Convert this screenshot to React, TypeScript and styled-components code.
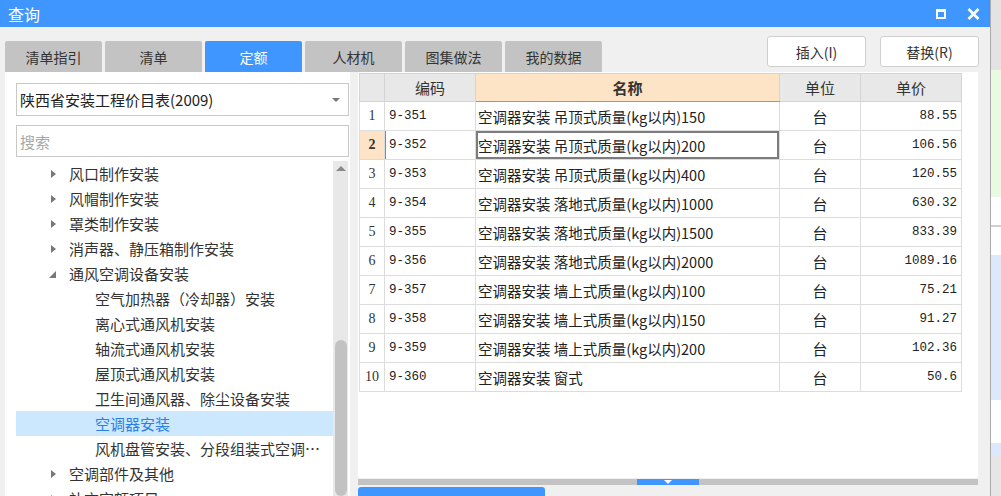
import { createGlobalStyle, styled } from 'styled-components'

const BLUE = '#3f96fe'

const GlobalStyle = createGlobalStyle`
  html, body {
    margin: 0;
    padding: 0;
    width: 1001px;
    height: 496px;
    overflow: hidden;
    background: #f0f0f0;
  }
  body {
    font-family: "Noto Sans CJK SC", "Noto Sans", sans-serif;
    color: #333;
  }
`

type TreeItem = {
  label: string
  level: 1 | 2
  arrow?: 'closed' | 'open'
  selected?: boolean
}

const treeItems: TreeItem[] = [
  { label: '风口制作安装', level: 1, arrow: 'closed' },
  { label: '风帽制作安装', level: 1, arrow: 'closed' },
  { label: '罩类制作安装', level: 1, arrow: 'closed' },
  { label: '消声器、静压箱制作安装', level: 1, arrow: 'closed' },
  { label: '通风空调设备安装', level: 1, arrow: 'open' },
  { label: '空气加热器（冷却器）安装', level: 2 },
  { label: '离心式通风机安装', level: 2 },
  { label: '轴流式通风机安装', level: 2 },
  { label: '屋顶式通风机安装', level: 2 },
  { label: '卫生间通风器、除尘设备安装', level: 2 },
  { label: '空调器安装', level: 2, selected: true },
  { label: '风机盘管安装、分段组装式空调器安装', level: 2 },
  { label: '空调部件及其他', level: 1, arrow: 'closed' },
  { label: '补充定额项目', level: 1, arrow: 'closed' },
]

const rows = [
  ['9-351', '空调器安装 吊顶式质量(kg以内)150', '88.55'],
  ['9-352', '空调器安装 吊顶式质量(kg以内)200', '106.56'],
  ['9-353', '空调器安装 吊顶式质量(kg以内)400', '120.55'],
  ['9-354', '空调器安装 落地式质量(kg以内)1000', '630.32'],
  ['9-355', '空调器安装 落地式质量(kg以内)1500', '833.39'],
  ['9-356', '空调器安装 落地式质量(kg以内)2000', '1089.16'],
  ['9-357', '空调器安装 墙上式质量(kg以内)100', '75.21'],
  ['9-358', '空调器安装 墙上式质量(kg以内)150', '91.27'],
  ['9-359', '空调器安装 墙上式质量(kg以内)200', '102.36'],
  ['9-360', '空调器安装 窗式', '50.6'],
]

const tabs = ['清单指引', '清单', '定额', '人材机', '图集做法', '我的数据']

export default function App() {
  return (
    <Screen>
      <GlobalStyle />
      <Window>
        <TitleBar>
          <Title>查询</Title>
          <WinControls>
            <MaxBox />
            <svg width="13" height="12" viewBox="0 0 13 12">
              <path d="M1.5 1 L11.5 11 M11.5 1 L1.5 11" stroke="#fff" strokeWidth="2.6" />
            </svg>
          </WinControls>
        </TitleBar>

        <Body>
          <Toolbar>
            <Tabs>
              {tabs.map((t) => (
                <Tab key={t} $active={t === '定额'}>
                  {t}
                </Tab>
              ))}
            </Tabs>
            <Actions>
              <ActionButton>插入(I)</ActionButton>
              <ActionButton>替换(R)</ActionButton>
            </Actions>
          </Toolbar>

          <Content>
            <LeftPanel>
              <Select>
                <span>陕西省安装工程价目表(2009)</span>
                <Caret />
              </Select>
              <Search>搜索</Search>
              <Tree>
                <TreeList>
                  {treeItems.map((item) => (
                    <TreeRow key={item.label} $level={item.level} $selected={item.selected}>
                      {item.arrow && (
                        <ArrowBox>
                          {item.arrow === 'closed' ? <ArrowRight /> : <ArrowOpen />}
                        </ArrowBox>
                      )}
                      <TreeLabel>{item.label}</TreeLabel>
                    </TreeRow>
                  ))}
                </TreeList>
                <ScrollBar>
                  <ScrollUp />
                  <ScrollThumb />
                </ScrollBar>
              </Tree>
            </LeftPanel>

            <RightPanel>
              <TableArea>
                <Grid>
                  <colgroup>
                    <col style={{ width: 25 }} />
                    <col style={{ width: 91 }} />
                    <col style={{ width: 304 }} />
                    <col style={{ width: 81 }} />
                    <col style={{ width: 101 }} />
                  </colgroup>
                  <thead>
                    <tr>
                      <Th />
                      <Th>编码</Th>
                      <Th $accent>名称</Th>
                      <Th>单位</Th>
                      <Th>单价</Th>
                    </tr>
                  </thead>
                  <tbody>
                    {rows.map(([code, name, price], i) => {
                      const current = i === 1
                      return (
                        <tr key={code}>
                          <NumCell $current={current}>{i + 1}</NumCell>
                          <CodeCell $current={current}>{code}</CodeCell>
                          <NameCell $focus={current}>{name}</NameCell>
                          <UnitCell>台</UnitCell>
                          <PriceCell>{price}</PriceCell>
                        </tr>
                      )
                    })}
                  </tbody>
                </Grid>
              </TableArea>
              <Splitter>
                <SplitHandle />
              </Splitter>
              <BottomBar>
                <BottomTab />
              </BottomBar>
            </RightPanel>
          </Content>
        </Body>
      </Window>

      <OtherApp>
        <Strip $h={70} $bg="#e3e3e3" />
        <Strip $h={127} $bg="#e8fae2" />
        <Strip $h={28} $bg="#ffffff" />
        <Strip $h={2} $bg="#cfcfcf" />
        <Strip $h={28} $bg="#ffffff" />
        <Strip $h={145} $bg="#dce8fb" />
        <Strip $h={43} $bg="#ffffff" />
        <Strip $h={12} $bg="#dce8fb" />
        <Strip $h={41} $bg="#e6e6e6" />
      </OtherApp>
    </Screen>
  )
}

const Screen = styled.div`
  display: flex;
  width: 1001px;
  height: 496px;
  overflow: hidden;
`

const Window = styled.div`
  width: 990px;
  display: flex;
  flex-direction: column;
  background: #f0f0f0;
`

const TitleBar = styled.div`
  height: 27px;
  flex: none;
  background: ${BLUE};
  display: flex;
  align-items: center;
  justify-content: space-between;
  padding: 0 10px 0 8px;
`

const Title = styled.span`
  color: #fff;
  font-size: 16px;
  line-height: 1;
`

const WinControls = styled.div`
  display: flex;
  align-items: center;
  gap: 21px;
`

const MaxBox = styled.div`
  width: 6px;
  height: 5px;
  border: 2px solid #fff;
  border-top-width: 3px;
`

const Body = styled.div`
  flex: 1;
  display: flex;
  flex-direction: column;
  min-height: 0;
`

const Toolbar = styled.div`
  height: 45px;
  flex: none;
  display: flex;
  padding: 0 11px 0 5px;
`

const Tabs = styled.div`
  display: flex;
  align-self: flex-end;
  gap: 3px;
`

const Tab = styled.div<{ $active?: boolean }>`
  width: 97px;
  height: 31px;
  display: flex;
  align-items: center;
  justify-content: center;
  font-size: 14px;
  border-radius: 2px 2px 0 0;
  background: ${(p) => (p.$active ? BLUE : '#c3c3c3')};
  color: ${(p) => (p.$active ? '#fff' : '#333')};
`

const Actions = styled.div`
  margin-left: auto;
  margin-top: 9px;
  display: flex;
  gap: 14px;
  align-self: flex-start;
`

const ActionButton = styled.div`
  width: 97px;
  height: 29px;
  display: flex;
  align-items: center;
  justify-content: center;
  background: #fff;
  border: 1px solid #cfcfcf;
  border-radius: 3px;
  font-size: 14px;
  color: #333;
`

const Content = styled.div`
  flex: 1;
  min-height: 0;
  display: flex;
  gap: 8px;
  padding: 0 12px 0 5px;
`

const LeftPanel = styled.div`
  width: 345px;
  flex: none;
  background: #fff;
  display: flex;
  flex-direction: column;
  padding: 11px 1px 0 11px;
  box-sizing: border-box;
  min-height: 0;
`

const Select = styled.div`
  height: 33px;
  flex: none;
  box-sizing: border-box;
  border: 1px solid #c8c8c8;
  display: flex;
  align-items: center;
  justify-content: space-between;
  padding: 0 8px 0 3px;
  font-size: 15px;
  color: #222;
`

const Caret = styled.span`
  width: 0;
  height: 0;
  border-left: 4px solid transparent;
  border-right: 4px solid transparent;
  border-top: 4px solid #777;
`

const Search = styled.div`
  margin-top: 9px;
  height: 32px;
  flex: none;
  box-sizing: border-box;
  border: 1px solid #c8c8c8;
  display: flex;
  align-items: center;
  padding-left: 3px;
  font-size: 15px;
  color: #a8a8a8;
`

const Tree = styled.div`
  margin-top: 4px;
  margin-right: 1px;
  flex: 1;
  min-height: 0;
  display: flex;
  overflow: hidden;
`

const TreeList = styled.div`
  flex: 1;
  min-width: 0;
  display: flex;
  flex-direction: column;
`

const TreeRow = styled.div<{ $level: 1 | 2; $selected?: boolean }>`
  height: 25px;
  flex: none;
  display: flex;
  align-items: center;
  padding-left: ${(p) => (p.$level === 1 ? 33 : 79)}px;
  padding-right: 12px;
  font-size: 15px;
  background: ${(p) => (p.$selected ? '#cce8ff' : 'transparent')};
  color: ${(p) => (p.$selected ? '#2b7fe6' : '#333')};
`

const ArrowBox = styled.span`
  width: 20px;
  flex: none;
  display: flex;
  align-items: center;
`

const ArrowRight = styled.span`
  width: 0;
  height: 0;
  margin-left: 2px;
  border-top: 4px solid transparent;
  border-bottom: 4px solid transparent;
  border-left: 5px solid #777;
`

const ArrowOpen = styled.span`
  width: 0;
  height: 0;
  margin-top: 2px;
  border-left: 7px solid transparent;
  border-bottom: 7px solid #777;
`

const TreeLabel = styled.span`
  white-space: nowrap;
  overflow: hidden;
  text-overflow: ellipsis;
`

const ScrollBar = styled.div`
  width: 15px;
  flex: none;
  background: #e8e8e8;
  display: flex;
  flex-direction: column;
  align-items: center;
`

const ScrollUp = styled.span`
  margin-top: 5px;
  width: 0;
  height: 0;
  border-left: 5px solid transparent;
  border-right: 5px solid transparent;
  border-bottom: 5px solid #8a8a8a;
`

const ScrollThumb = styled.div`
  margin-top: 169px;
  width: 12px;
  flex: 1;
  border-radius: 6px;
  background: #c2c2c2;
`

const RightPanel = styled.div`
  flex: 1;
  display: flex;
  flex-direction: column;
  min-height: 0;
`

const TableArea = styled.div`
  height: 406px;
  flex: none;
  background: #fff;
  padding: 1px 0 0 1px;
  box-sizing: border-box;
`

const Grid = styled.table`
  border-collapse: collapse;
  table-layout: fixed;
  width: 602px;
`

const Th = styled.th<{ $accent?: boolean }>`
  height: 27px;
  padding: 0;
  font-size: 15px;
  font-weight: ${(p) => (p.$accent ? 700 : 400)};
  color: #333;
  background: ${(p) => (p.$accent ? '#fde4c6' : '#e8e8e8')};
  border: 1px solid #d4d4d4;
  border-bottom: 1px solid ${(p) => (p.$accent ? '#58a4ff' : '#d4d4d4')};
`

const Td = styled.td`
  height: 28px;
  padding: 0;
  border: 1px solid #dcdcdc;
  white-space: nowrap;
  overflow: hidden;
  color: #222;
`

const NumCell = styled(Td)<{ $current?: boolean }>`
  text-align: center;
  font-family: "Liberation Serif", serif;
  font-size: 14px;
  font-weight: ${(p) => (p.$current ? 700 : 400)};
  background: ${(p) => (p.$current ? '#fde4c6' : '#fff')};
  color: #333;
`

const CodeCell = styled(Td)<{ $current?: boolean }>`
  padding-left: 4px;
  font-family: "Liberation Mono", monospace;
  font-size: 12.5px;
  box-shadow: ${(p) => (p.$current ? `inset 1px 0 0 ${BLUE}` : 'none')};
`

const NameCell = styled(Td)<{ $focus?: boolean }>`
  padding-left: 2px;
  font-size: 14.5px;
  box-shadow: ${(p) => (p.$focus ? 'inset 0 0 0 2px #7c7c7c' : 'none')};
`

const UnitCell = styled(Td)`
  text-align: center;
  font-size: 15px;
`

const PriceCell = styled(Td)`
  text-align: right;
  padding-right: 4px;
  font-family: "Liberation Mono", monospace;
  font-size: 12.5px;
`

const Splitter = styled.div`
  height: 6px;
  flex: none;
  margin-top: 1px;
  background: #c3c3c3;
  display: flex;
  justify-content: center;
`

const SplitHandle = styled.div`
  width: 62px;
  background: ${BLUE};
  display: flex;
  justify-content: center;
  align-items: center;

  &::after {
    content: '';
    width: 0;
    height: 0;
    border-left: 4px solid transparent;
    border-right: 4px solid transparent;
    border-top: 4px solid #fff;
  }
`

const BottomBar = styled.div`
  flex: 1;
  display: flex;
  padding-top: 2px;
`

const BottomTab = styled.div`
  width: 187px;
  height: 26px;
  background: ${BLUE};
  border-radius: 3px 3px 0 0;
`

const OtherApp = styled.div`
  width: 10px;
  flex: none;
  border-left: 1px solid #a9a9a9;
  display: flex;
  flex-direction: column;
`

const Strip = styled.div<{ $h: number; $bg: string }>`
  height: ${(p) => p.$h}px;
  flex: none;
  background: ${(p) => p.$bg};
`
